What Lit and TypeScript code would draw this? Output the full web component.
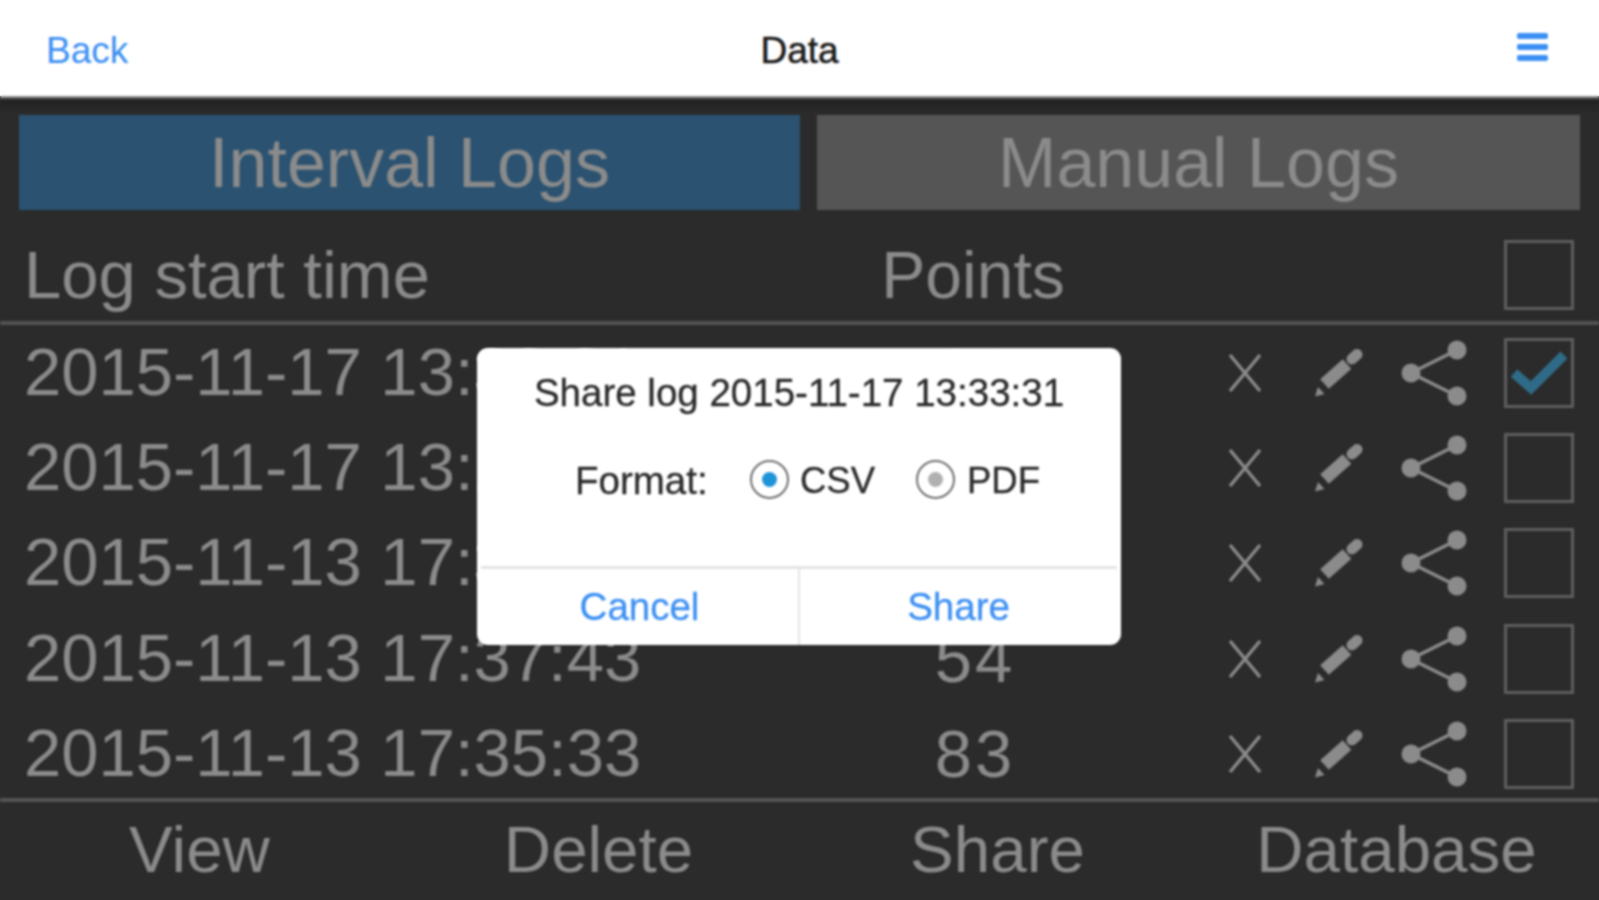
import { LitElement, html, css, svg } from 'lit';
import { customElement } from 'lit/decorators.js';

interface LogRow {
  time: string;
  points: string;
  checked?: boolean;
}

const ROWS: LogRow[] = [
  { time: '2015-11-17 13:33:31', points: '61', checked: true },
  { time: '2015-11-17 13:12:08', points: '47' },
  { time: '2015-11-13 17:39:52', points: '36' },
  { time: '2015-11-13 17:37:43', points: '54' },
  { time: '2015-11-13 17:35:33', points: '83' },
];

const closeIcon = svg`<svg class="ic-x" viewBox="0 0 34 40"><path d="M2 2 32 38M32 2 2 38" fill="none" stroke="currentColor" stroke-width="3.4"/></svg>`;

const pencilIcon = svg`<svg class="ic-pen" viewBox="0 0 50 48"><path d="M38 10 43 5.500" fill="none" stroke="currentColor" stroke-width="11" stroke-linecap="round"/><path d="M33 15 10.500 35" fill="none" stroke="currentColor" stroke-width="13"/><path d="M4 38 10.500 45 1 47.500Z" fill="currentColor"/></svg>`;

const shareIcon = svg`<svg class="ic-share" viewBox="0 0 66 66"><path d="M56 10 10 33 56 56" fill="none" stroke="currentColor" stroke-width="3.600"/><circle cx="56" cy="10" r="9.500" fill="currentColor"/><circle cx="10" cy="33" r="9.500" fill="currentColor"/><circle cx="56" cy="56" r="9.500" fill="currentColor"/></svg>`;

const checkIcon = svg`<svg class="ic-check" viewBox="0 0 56 46"><path d="M3 23 20 38 53 5" fill="none" stroke="#2f6b88" stroke-width="10"/></svg>`;

@customElement('app-root')
export class AppRoot extends LitElement {
  static override styles = css`
    :host {
      display: block;
      position: relative;
      width: 1599px;
      height: 900px;
      overflow: hidden;
      background: linear-gradient(#fff 96px, #2b2b2b 96px);
      font-family: 'Liberation Sans', Arial, sans-serif;
      color: #8b8b8b;
    }

    .page {
      width: 1599px;
      height: 900px;
      display: flex;
      flex-direction: column;
      filter: blur(1px);
    }

    .nav {
      height: 96px;
      flex: none;
      background: #fff;
      display: flex;
      align-items: center;
      justify-content: space-between;
      padding: 6px 51px 0 46px;
      box-sizing: border-box;
      position: relative;
      font-size: 37px;
      color: #3b8ff3;
    }

    .nav .title {
      position: absolute;
      left: 0;
      right: 0;
      text-align: center;
      color: #1a1a1a;
      -webkit-text-stroke: 0.5px #1a1a1a;
    }

    .burger {
      display: flex;
      flex-direction: column;
      gap: 5px;
      margin-top: -8px;
    }

    .burger i {
      display: block;
      width: 31px;
      height: 6px;
      border-radius: 2px;
      background: #3b8ff3;
    }

    .nav-edge {
      height: 4px;
      flex: none;
      background: linear-gradient(#a8a8a8, #1c1c1c);
    }

    .tabs {
      flex: none;
      display: flex;
      gap: 17px;
      padding: 15px 19px 0;
      background: linear-gradient(#222 0, #2b2b2b 14px);
    }

    .tab {
      flex: 1;
      height: 95px;
      display: flex;
      align-items: center;
      justify-content: center;
      background: #555;
      font-size: 70px;
      color: #8b8b8b;
    }

    .tab.active {
      flex: 0 0 781px;
      background: #2b5270;
    }

    .row {
      flex: none;
      height: 95.4px;
      display: flex;
      align-items: center;
      padding-left: 24px;
      font-size: 67px;
      box-sizing: border-box;
    }

    .row.head {
      height: 115px;
      padding-top: 18px;
      border-bottom: 4px solid #525252;
    }

    .time {
      width: 701px;
      flex: none;
      white-space: nowrap;
      padding-bottom: 3px;
    }

    .points {
      width: 496px;
      flex: none;
      box-sizing: border-box;
      padding: 0 0 1px 4px;
      text-align: center;
      letter-spacing: 3px;
    }

    .head .time,
    .head .points {
      padding: 0;
    }

    .head .points {
      font-size: 66px;
      letter-spacing: 0;
    }

    .actions {
      display: flex;
      align-items: center;
      margin-left: 7px;
      width: 346px;
      height: 70px;
    }

    .head .actions {
      justify-content: flex-end;
    }

    svg {
      display: block;
      flex: none;
      color: #8b8b8b;
    }

    .ic-x {
      width: 34px;
      height: 40px;
      margin-right: 52px;
    }

    .ic-pen {
      width: 50px;
      height: 48px;
      margin-right: 37px;
    }

    .ic-share {
      width: 66px;
      height: 66px;
      margin-right: 37px;
    }

    .box {
      width: 70px;
      height: 70px;
      box-sizing: border-box;
      border: 3.500px solid #5f5f5f;
      display: flex;
      align-items: center;
      justify-content: center;
      flex: none;
    }

    .ic-check {
      width: 56px;
      height: 46px;
    }

    .toolbar {
      flex: 1;
      display: grid;
      grid-template-columns: repeat(4, 399px);
      align-items: center;
      justify-items: center;
      margin-top: -4px;
      border-top: 4px solid #555;
      font-size: 65.500px;
      padding-bottom: 3px;
    }

    .dialog {
      position: absolute;
      left: 477px;
      top: 348px;
      width: 644px;
      height: 297px;
      background: #fff;
      border-radius: 11px;
      display: flex;
      flex-direction: column;
      color: #2a2a2a;
      font-size: 38.500px;
      -webkit-text-stroke: 0.3px currentColor;
      filter: blur(0.9px);
    }

    .dialog h2 {
      margin: 0;
      font: inherit;
      text-align: center;
      padding-top: 25px;
      height: 40px;
      line-height: 40px;
      white-space: nowrap;
    }

    .format {
      display: flex;
      align-items: center;
      height: 40px;
      margin-top: 48px;
      padding-left: 98px;
    }

    .format .label {
      width: 175px;
      flex: none;
    }

    .radio {
      width: 39px;
      height: 39px;
      box-sizing: border-box;
      flex: none;
      border: 2px solid #6e6e6e;
      border-radius: 50%;
      display: flex;
      align-items: center;
      justify-content: center;
      margin-top: -4px;
      margin-right: 12px;
    }

    .radio i {
      width: 15px;
      height: 15px;
      border-radius: 50%;
      background: #b0b0b0;
    }

    .radio.on {
      margin-right: 11px;
    }

    .radio.on i {
      background: #1f93d8;
    }

    .opt {
      width: 76px;
      flex: none;
      white-space: nowrap;
      font-size: 36.500px;
    }

    .opt.first {
      width: 116px;
    }

    .buttons {
      margin-top: auto;
      height: 76px;
      display: flex;
      border-top: 3px solid #e4e4e4;
      margin-inline: 4px;
      color: #3b8ff3;
    }

    .buttons span {
      flex: 1;
      display: flex;
      align-items: center;
      justify-content: center;
    }

    .buttons span + span {
      border-left: 2px solid #e4e4e4;
    }
  `;

  private renderRow(row: LogRow) {
    return html`
      <div class="row">
        <span class="time">${row.time}</span>
        <span class="points">${row.points}</span>
        <div class="actions">
          ${closeIcon}${pencilIcon}${shareIcon}
          <div class="box">${row.checked ? checkIcon : ''}</div>
        </div>
      </div>
    `;
  }

  override render() {
    return html`
      <div class="page">
        <header class="nav">
          <span>Back</span>
          <span class="title">Data</span>
          <div class="burger"><i></i><i></i><i></i></div>
        </header>
        <div class="nav-edge"></div>
        <div class="tabs">
          <div class="tab active">Interval Logs</div>
          <div class="tab">Manual Logs</div>
        </div>
        <div class="row head">
          <span class="time">Log start time</span>
          <span class="points">Points</span>
          <div class="actions"><div class="box"></div></div>
        </div>
        ${ROWS.map((row) => this.renderRow(row))}
        <footer class="toolbar">
          <span>View</span>
          <span>Delete</span>
          <span>Share</span>
          <span>Database</span>
        </footer>
      </div>
      <div class="dialog">
        <h2>Share log 2015-11-17 13:33:31</h2>
        <div class="format">
          <span class="label">Format:</span>
          <div class="radio on"><i></i></div>
          <span class="opt first">CSV</span>
          <div class="radio"><i></i></div>
          <span class="opt">PDF</span>
        </div>
        <div class="buttons">
          <span>Cancel</span>
          <span>Share</span>
        </div>
      </div>
    `;
  }
}
